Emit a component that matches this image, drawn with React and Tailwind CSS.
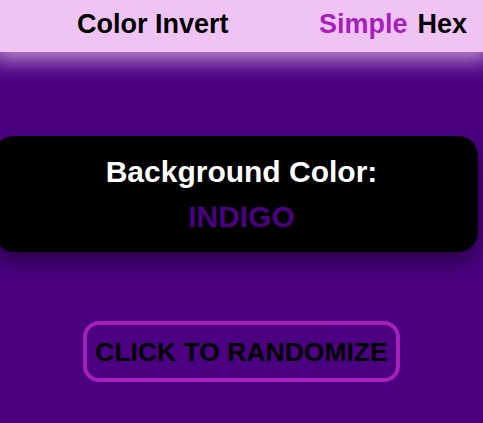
import { useState } from 'react'

const COLORS = [
  { name: 'INDIGO', hex: '#4b0082' },
  { name: 'TEAL', hex: '#008080' },
  { name: 'CRIMSON', hex: '#dc143c' },
  { name: 'GOLD', hex: '#ffd700' },
]

const App = () => {
  const [color] = useState(COLORS[0])

  return (
    <div
      className="min-h-screen flex flex-col font-['Liberation_Sans',Arial,sans-serif] font-bold"
      style={{ backgroundColor: color.hex }}
    >
      <header className="relative z-10 h-[52px] pb-[3px] bg-[#efc3f3] shadow-[0_0_22px_8px_rgba(239,195,243,0.75)] flex items-center justify-between pl-[77px] pr-[16px] text-[27px] leading-none text-black">
        <span>Color Invert</span>
        <span className="flex gap-[10px]">
          <span className="text-[#a61fbb]">Simple</span>
          <span>Hex</span>
        </span>
      </header>

      <main className="flex flex-col items-start pt-[84px]">
        <div className="-ml-[6px] w-[484px] pl-[11px] py-[13px] bg-black rounded-[20px] shadow-[0_10px_22px_rgba(0,0,0,0.45)] text-center text-[30px] leading-[45px]">
          <div className="text-white">Background Color:</div>
          <div style={{ color: color.hex }}>{color.name}</div>
        </div>

        <button className="self-center mt-[69px] w-[317px] h-[61px] pt-[2px] border-4 border-[#a61fbb] rounded-[16px] flex items-center justify-center text-[26.5px] leading-none text-black">
          CLICK TO RANDOMIZE
        </button>
      </main>
    </div>
  )
}

export default App
